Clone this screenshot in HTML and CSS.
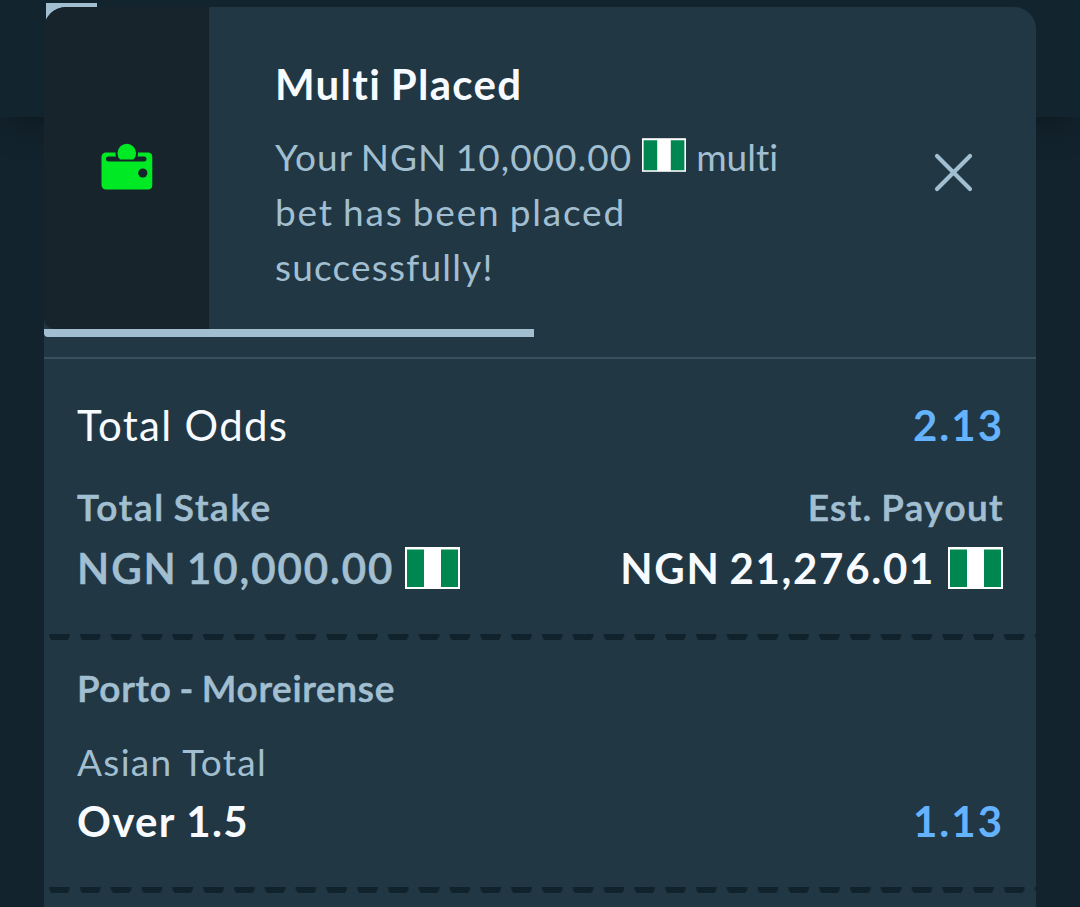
FILE: index.html
```html
<!DOCTYPE html>
<html lang="en">
<head>
    <meta charset="UTF-8">
    <meta name="viewport" content="width=device-width, initial-scale=1.0">
    <title>Bet Slip</title>
    <link rel="stylesheet" href="styles.css">
</head>
<body>

<div class="header"></div>

<div class="slip">
    <div class="tab"></div>

    <div class="toast">
        <div class="toast-icon">
            <svg width="52" height="48" viewBox="0 0 52 48">
                <path class="wallet" d="M5 9.500H14.500A11 11 0 0 0 15 13.500H7.500A2.500 2.500 0 0 0 7.500 18.500H43A2.500 2.500 0 0 0 43 13.500H36.500A11 11 0 0 0 37 9.500H47A4.500 4.500 0 0 1 51.300 14V42A4.500 4.500 0 0 1 47 46.500H5A4.500 4.500 0 0 1 .500 42V14A4.500 4.500 0 0 1 5 9.500Z"/>
                <path class="wallet" d="M19 16.500A9.300 9.300 0 1 1 32.500 16.500Z"/>
                <circle class="clasp" cx="41.800" cy="30" r="4.600"/>
            </svg>
        </div>
        <div class="toast-body">
            <div class="toast-title">Multi Placed</div>
            <div class="toast-text">
                <span class="amount">Your NGN 10,000.00</span><svg class="flag flag-small" viewBox="0 0 55 42"><rect width="55" height="42" fill="#fff"/><path d="M2 2.500H19V40H2ZM36 2.500H53V40H36Z" fill="#008751"/></svg><span class="multi">multi</span><br>
                <span class="line2">bet has been placed</span><br>
                <span class="line3">successfully!</span>
            </div>
        </div>
        <div class="toast-close">
            <svg width="40" height="40" viewBox="0 0 40 40"><path d="M3 4L36 37M36 4L3 37"/></svg>
        </div>
        <div class="progress"></div>
    </div>

    <div class="totals">
        <div class="row">
            <span class="label-big">Total Odds</span>
            <span class="odds">2.13</span>
        </div>
        <div class="row labels">
            <span class="label stake-label">Total Stake</span>
            <span class="label payout-label">Est. Payout</span>
        </div>
        <div class="row">
            <span class="money stake"><span>NGN 10,000.00</span><svg class="flag" viewBox="0 0 55 42"><rect width="55" height="42" fill="#fff"/><path d="M2 2.500H19V40H2ZM36 2.500H53V40H36Z" fill="#008751"/></svg></span>
            <span class="money payout"><span>NGN 21,276.01</span><svg class="flag" viewBox="0 0 55 42"><rect width="55" height="42" fill="#fff"/><path d="M2 2.500H19V40H2ZM36 2.500H53V40H36Z" fill="#008751"/></svg></span>
        </div>
    </div>

    <svg class="dashes" width="992" height="6">
        <defs>
            <pattern id="dash" x="5" width="30.800" height="6" patternUnits="userSpaceOnUse">
                <path d="M0 0H21Q20.500 4.500 18.500 6H2.500Q.500 4.500 0 0Z" fill="#10222c"/>
            </pattern>
        </defs>
        <rect width="992" height="6" fill="url(#dash)"/>
    </svg>

    <div class="bet">
        <div class="label match">Porto - Moreirense</div>
        <div class="market">Asian Total</div>
        <div class="row">
            <span class="pick">Over 1.5</span>
            <span class="odds">1.13</span>
        </div>
    </div>

    <svg class="dashes" width="992" height="6">
        <rect width="992" height="6" fill="url(#dash)"/>
    </svg>
</div>

</body>
</html>
```

FILE: styles.css
```css
* {
    box-sizing: border-box;
}
body {
    margin: 0;
    height: 907px;
    overflow: hidden;
    background: #13232d;
    font-family: Lato, "Liberation Sans", sans-serif;
    font-variant-ligatures: none;
    color: #f7fbff;
    white-space: nowrap;
}
.header {
    position: absolute;
    z-index: -2;
    top: 0;
    left: 0;
    width: 1080px;
    height: 117px;
    background: #12242e;
    box-shadow: 0 16px 24px -8px #0e1a21;
}
.slip {
    position: relative;
    width: 992px;
    height: 900px;
    margin: 7px auto 0;
    background: #213743;
    border-radius: 22px 22px 0 0;
}
/* loading bar peeking out behind the toast */
.tab {
    position: absolute;
    z-index: -1;
    top: -4px;
    left: 2px;
    width: 51px;
    height: 24px;
    background: #a2bfd1;
}
.toast {
    position: relative;
    display: flex;
    height: 330px;
}
.toast-icon {
    display: flex;
    justify-content: center;
    width: 165px;
    height: 322px;
    padding-top: 136px;
    background: #18242c;
    border-radius: 22px 0 0 10px;
}
.wallet {
    fill: #00e925;
}
.clasp {
    fill: #18242c;
}
.toast-body {
    flex: 1;
    padding: 49px 0 0 66px;
}
.toast-title {
    margin-bottom: 17px;
    font-size: 42px;
    font-weight: 700;
    line-height: 56px;
    letter-spacing: 1.3px;
    word-spacing: -2px;
}
.toast-text {
    font-size: 37px;
    line-height: 55px;
    color: #a2bfd1;
}
.amount {
    letter-spacing: 1px;
    word-spacing: -2px;
}
.line2 {
    letter-spacing: 1.8px;
    word-spacing: -2px;
}
.line3 {
    letter-spacing: 1.2px;
}
.toast-close {
    padding: 145px 62px 0 0;
}
.toast-close svg {
    display: block;
}
.toast-close path {
    stroke: #a2bfd1;
    stroke-width: 4.2;
    stroke-linecap: round;
}
.progress {
    position: absolute;
    bottom: 0;
    left: 0;
    width: 490px;
    height: 8px;
    background: #a2bfd1;
    border-bottom-left-radius: 4px;
}
.flag {
    width: 55px;
    height: 42px;
    margin: -1px 0 0 11px;
}
.flag-small {
    width: 44px;
    height: 34px;
    margin: 0 10px;
    vertical-align: -1px;
}
.totals {
    height: 277px;
    margin-top: 20px;
    padding: 38px 33px 0;
    border-top: 2px solid #3a5060;
}
.row {
    display: flex;
    justify-content: space-between;
    line-height: 56px;
}
.label-big {
    font-size: 42px;
    letter-spacing: 1.3px;
}
.odds {
    margin-right: -1px;
    font-size: 42px;
    font-weight: 700;
    letter-spacing: 2px;
    color: #65b2ff;
}
.labels {
    margin: 30px 0 9px;
}
.label {
    font-size: 37px;
    font-weight: 600;
    line-height: 48px;
    color: #a2bfd1;
    -webkit-text-stroke: 0.6px #a2bfd1;
}
.stake-label {
    letter-spacing: 1.7px;
    word-spacing: -2px;
}
.payout-label {
    margin-right: -1px;
    letter-spacing: 1.4px;
    word-spacing: -2px;
}
.match {
    letter-spacing: 0.7px;
    word-spacing: -2px;
}
.money {
    display: flex;
    align-items: center;
    font-size: 42px;
    font-weight: 600;
}
.stake {
    letter-spacing: 1.9px;
    word-spacing: -3px;
    color: #a2bfd1;
    -webkit-text-stroke: 0.6px #a2bfd1;
}
.payout {
    font-weight: 700;
    letter-spacing: 1.7px;
    word-spacing: -3px;
}
.payout .flag {
    margin-left: 13px;
}
.dashes {
    display: block;
}
.bet {
    height: 247px;
    padding: 24px 33px 0;
}
.market {
    margin: 26px 0 7px;
    font-size: 37px;
    line-height: 48px;
    letter-spacing: 1.3px;
    color: #a2bfd1;
}
.pick {
    font-size: 42px;
    font-weight: 700;
    letter-spacing: 1.3px;
}
```
